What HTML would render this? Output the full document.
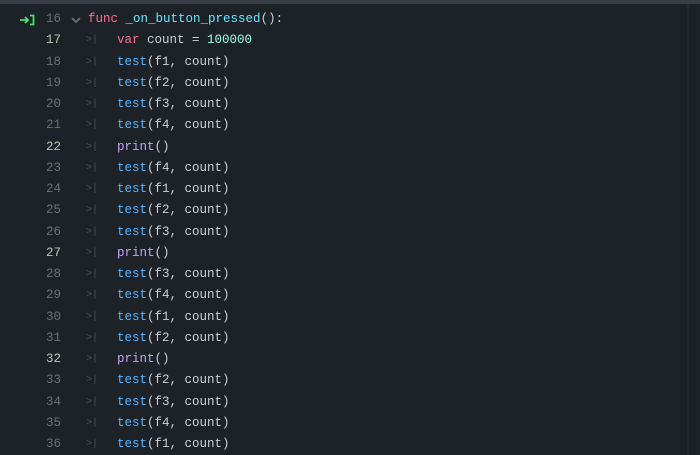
<!DOCTYPE html>
<html><head><style>
body{margin:0;width:700px;height:455px;background:#1d2229;overflow:hidden;font-family:"Liberation Mono","DejaVu Sans Mono",monospace;font-size:12.5px;}
.top{position:absolute;left:0;top:0;width:700px;height:4px;background:#3a3f47;}
.vl{position:absolute;left:687px;top:4px;width:2px;height:451px;background:#232830;}
.row{position:absolute;left:0;width:700px;height:21px;line-height:21px;white-space:pre;}
.row>*{position:absolute;top:0;}
.ln{left:30px;width:31px;text-align:right;color:#6b707a;}
.ln.h{color:#b9c9b0;}
.tab{left:86px;color:#4c515a;font-size:10px;}
.code{left:117px;color:#cdcfd2;}
.kw{color:#ff7085}.fn{color:#57b3ff}.pr{color:#c7a0ff}.num{color:#a1ffe0}.nm{color:#66e6ff}
</style></head><body>
<div class="top"></div><div class="vl"></div>
<div class="row" style="top:9px"><svg style="left:19px;top:5px" width="16" height="12" viewBox="0 0 16 12"><path d="M1 6H9M6 3L9 6L6 9" stroke="#45e06a" stroke-width="1.8" fill="none"/><path d="M11 1.5H14.5V10.5H11" stroke="#45e06a" stroke-width="1.8" fill="none"/></svg><span class="ln">16</span><svg style="left:71px;top:8px" width="10" height="6" viewBox="0 0 10 6"><path d="M1 1L5 5L9 1" stroke="#6b707a" stroke-width="1.8" fill="none"/></svg><span class="code" style="left:88px"><span class="kw">func</span> <span class="nm">_on_button_pressed</span>():</span></div>
<div id="rows"></div>
<script>
var L=[["h",'<span class="kw">var</span> count = <span class="num">100000</span>'],
["","t1"],["","t2"],["","t3"],["","t4"],["h","p"],["","t4"],["","t1"],["","t2"],["","t3"],["h","p"],
["","t3"],["","t4"],["","t1"],["","t2"],["h","p"],["","t2"],["","t3"],["","t4"],["","t1"]];
var h="";
for(var i=0;i<L.length;i++){var c=L[i][1];
if(c[0]=="t")c='<span class="fn">test</span>(f'+c[1]+', count)';else if(c=="p")c='<span class="pr">print</span>()';
h+='<div class="row" style="top:'+(9+21.25*(i+1))+'px"><span class="ln '+L[i][0]+'">'+(17+i)+'</span><span class="tab">&gt;|</span><span class="code">'+c+'</span></div>';}
document.getElementById("rows").innerHTML=h;
</script>
</body></html>
